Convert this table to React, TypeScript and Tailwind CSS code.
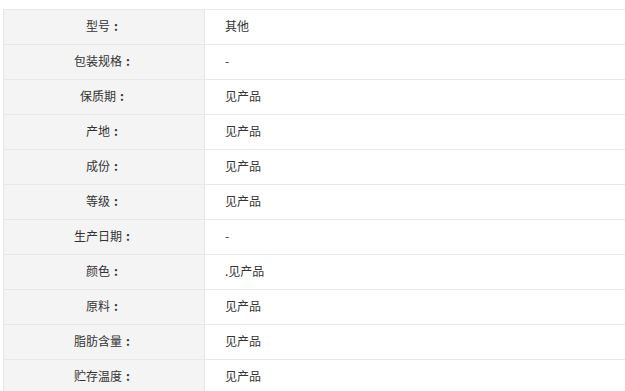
const rows: [string, string][] = [
  ['型号', '其他'],
  ['包装规格', '-'],
  ['保质期', '见产品'],
  ['产地', '见产品'],
  ['成份', '见产品'],
  ['等级', '见产品'],
  ['生产日期', '-'],
  ['颜色', '.见产品'],
  ['原料', '见产品'],
  ['脂肪含量', '见产品'],
  ['贮存温度', '见产品'],
];

export default function App() {
  return (
    <div className="h-[391px] w-[625px] overflow-hidden bg-white pl-[3px] pt-[9px] text-[12px] text-[#333] font-['Microsoft_YaHei','Noto_Sans_CJK_SC',sans-serif]">
      <div className="w-[660px] border-l border-t border-[#e8e8e8]">
        {rows.map(([label, value]) => (
          <div key={label} className="flex h-[35px] border-b border-[#e8e8e8]">
            <div className="flex w-[201px] items-center justify-center border-r border-[#e8e8e8] bg-[#f4f4f4] pb-[2px]">
              {label}
              <span className="inline-block w-3 text-center font-bold">:</span>
            </div>
            <div className="flex flex-1 items-center pb-[2px] pl-5">{value}</div>
          </div>
        ))}
      </div>
    </div>
  );
}
